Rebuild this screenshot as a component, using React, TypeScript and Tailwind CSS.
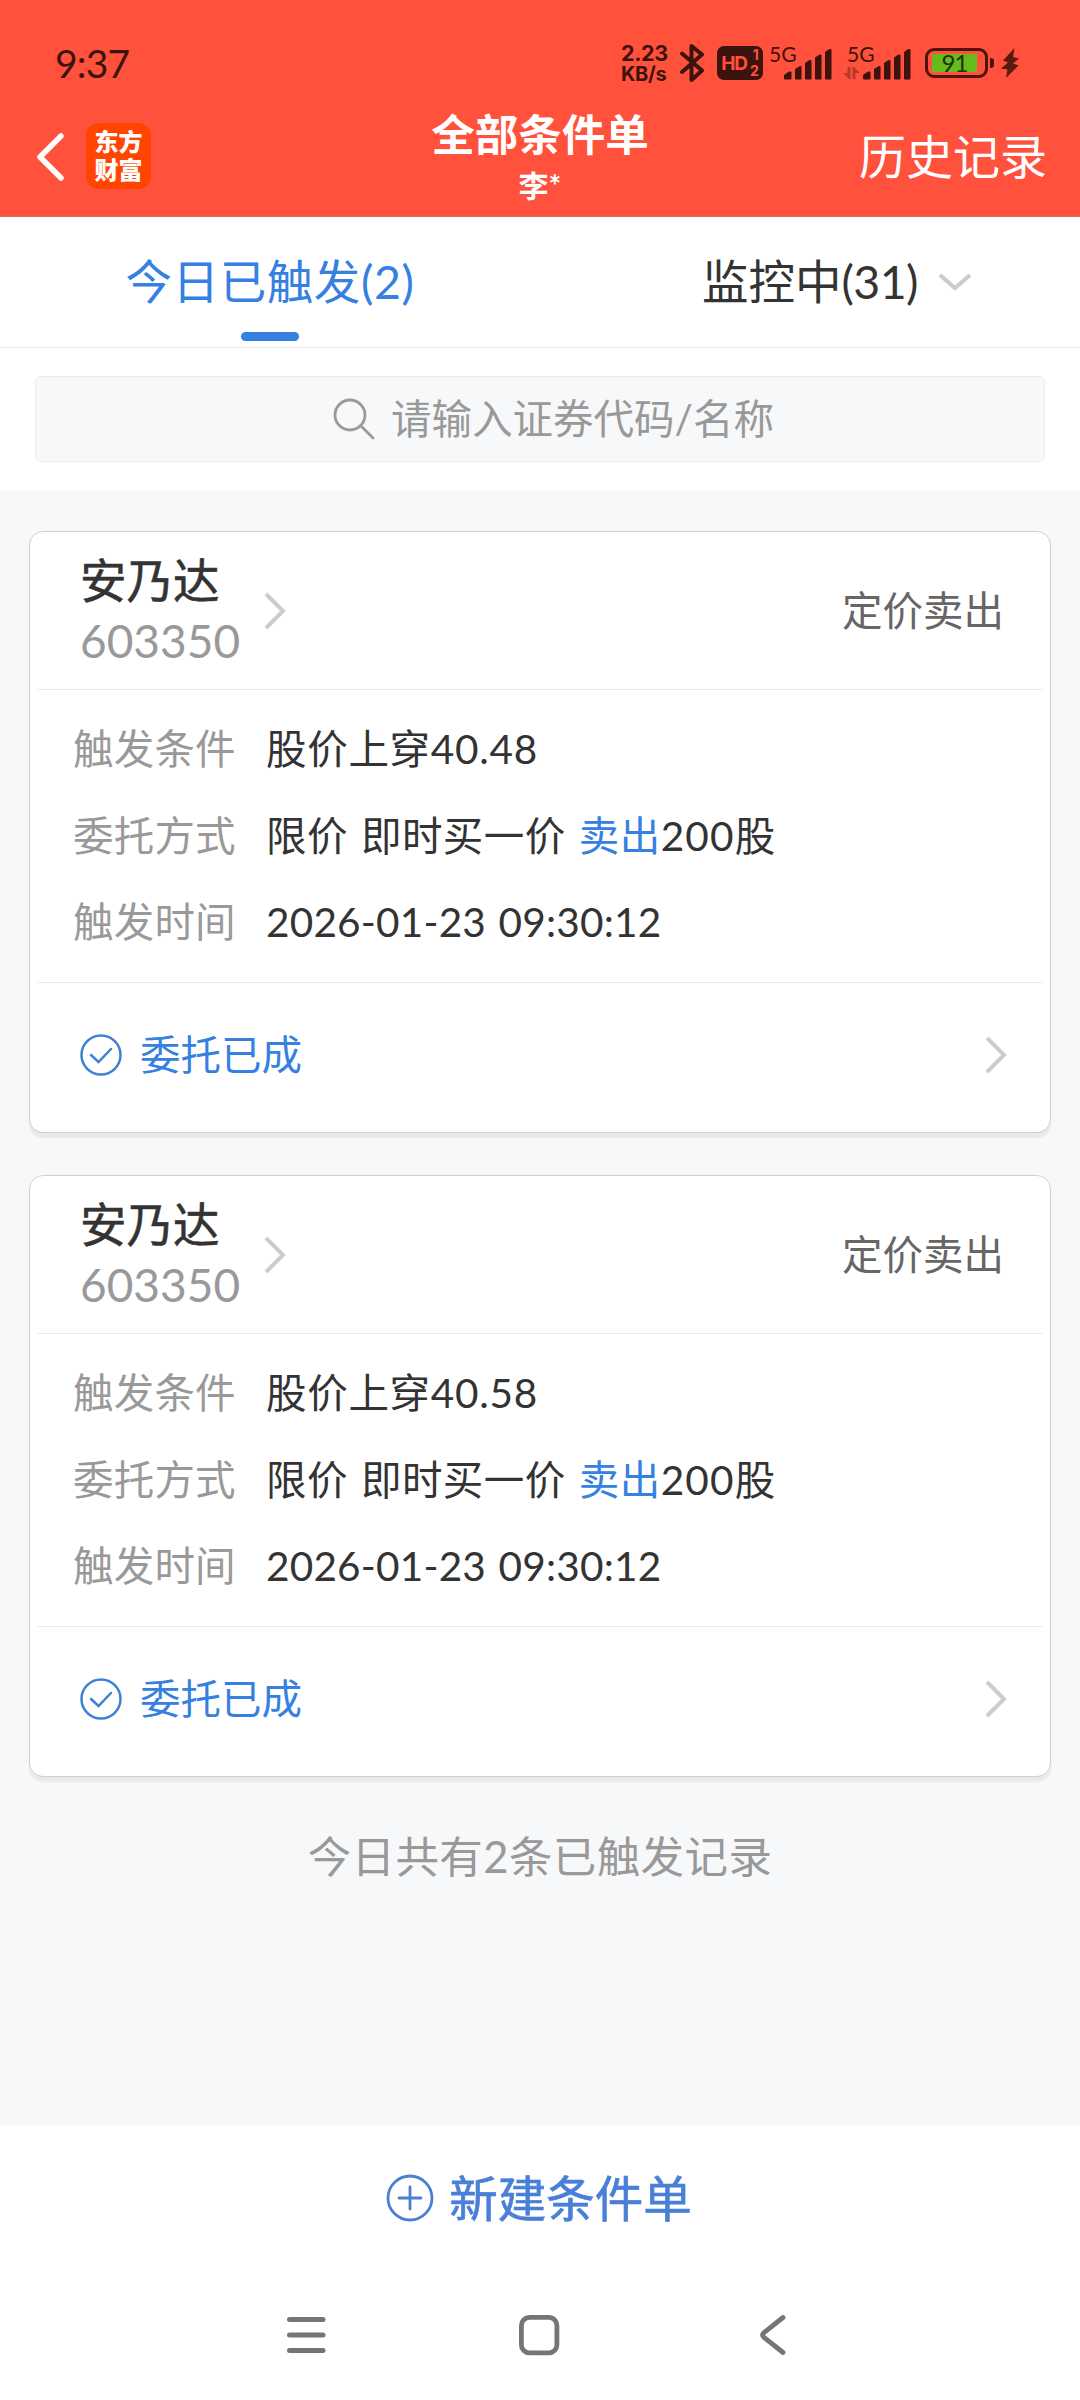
import React from 'react';

interface Order {
  id: number;
  name: string;
  code: string;
  type: string;
  condition: string;
  time: string;
}

const orders: Order[] = [
  { id: 1, name: '安乃达', code: '603350', type: '定价卖出', condition: '股价上穿40.48', time: '2026-01-23 09:30:12' },
  { id: 2, name: '安乃达', code: '603350', type: '定价卖出', condition: '股价上穿40.58', time: '2026-01-23 09:30:12' },
];

const SignalBars: React.FC = () => (
  <svg width="48" height="31" viewBox="0 0 48 31" fill="#3d130d">
    <path d="M0 29.5v-3.5l5-3.5h1.5q1 0 1 1v6q0 1-1 1h-5.5q-1 0-1-1z" />
    <path d="M11 29.500V20l5-3h.5q1 0 1 1v11.500q0 1-1 1h-4.500q-1 0-1-1z" />
    <path d="M21 29.500V14l4.500-3h1q1 0 1 1v17.500q0 1-1 1h-4.500q-1 0-1-1z" />
    <path d="M31 29.500V8.500l4.500-3h1q1 0 1 1v23q0 1-1 1h-4.500q-1 0-1-1z" />
    <path d="M41 29.500V3l4.500-3h1q1 0 1 1v28.500q0 1-1 1h-4.500q-1 0-1-1z" />
  </svg>
);

const StatusBar: React.FC = () => (
  <div className="flex h-[106px] items-start pl-[55px] text-[#3d130d]">
    <div className="mt-[39px] w-[566px] text-[39px] leading-[48px] tracking-[-0.8px]">9:37</div>
    <div className="mt-[43px] w-[59px] font-[Inter] text-[21px] font-bold whitespace-nowrap">
      <div className="text-[21.5px] leading-[21px] tracking-[-0.3px]">2.23</div>
      <div className="text-[20px] leading-[20px] tracking-[-0.3px]">KB/s</div>
    </div>
    <svg className="mt-[43px]" width="24" height="40" viewBox="0 0 24 40" fill="none" stroke="#3d130d" strokeWidth="4" strokeLinejoin="round" strokeLinecap="round">
      <path d="M2 10.500L22 27.500L11.500 37V3L22 11.500L2 29" />
    </svg>
    <div className="mt-[46px] ml-[13px] flex h-[34px] w-[46px] items-center justify-center gap-[3px] rounded-[7px] bg-[#3d130d] font-[Inter] font-bold text-[#ff513c]">
      <span className="text-[19px] leading-none tracking-[-1px]">HD</span>
      <span className="flex flex-col items-end text-[14px] leading-[16px]">
        <span>1</span>
        <span>2</span>
      </span>
    </div>
    <div className="mt-[44px] ml-[6px] flex">
      <span className="w-[15px] text-[21px] leading-[19px]">5G</span>
      <div className="mt-[5px]">
        <SignalBars />
      </div>
    </div>
    <div className="mt-[44px] ml-[11px] flex">
      <div className="w-[20px]">
        <div className="w-[30px] pl-[4px] text-[21px] leading-[19px]">5G</div>
        <svg className="mt-[4px]" width="17" height="12" viewBox="0 0 17 12" fill="#b93a2b">
          <path d="M4.500 0H7.500V12H6L0 6H4.500z" />
          <path d="M9.500 0H11L17 6H12.500V12H9.500z" />
        </svg>
      </div>
      <div className="mt-[5px]">
        <SignalBars />
      </div>
    </div>
    <div className="mt-[48px] ml-[14px] flex items-center">
      <div className="flex h-[30px] w-[63px] items-center rounded-[9px] border-[3px] border-[#4d150d] pl-[4px]">
        <div className="flex h-[18px] w-[45px] items-center justify-center bg-[#66ba1b] text-[24px] leading-none tracking-[-1px] text-[#1c3108]">91</div>
      </div>
      <div className="ml-[2px] h-[10px] w-[4px] rounded-r-[3px] rounded-l-[1px] bg-[#4d150d]" />
    </div>
    <svg className="mt-[48px] ml-[7px]" width="18" height="30" viewBox="0 0 18 30" fill="#5a1a12">
      <path d="M13.500 0L2 12.500L7 14.500L0 20.500L6.500 21.500L5 30L17.500 17.500L12 15.500L18 10.500L12 9z" />
    </svg>
  </div>
);

const Header: React.FC = () => (
  <header className="h-[217px] border-b border-[#d9705f] bg-[#ff513c]">
    <StatusBar />
    <div className="grid h-[104px] grid-cols-3 text-white">
      <div className="flex items-start pl-[34px]">
        <svg className="mt-[26px]" width="32" height="50" viewBox="0 0 32 50" fill="none" stroke="#fff" strokeWidth="5.500" strokeLinecap="round" strokeLinejoin="round">
          <path d="M27 4L6 25L27 46" />
        </svg>
        <div className="mt-[17px] ml-[20px] flex h-[66px] w-[65px] flex-col items-center justify-center rounded-[13px] bg-[#ff4500] text-[24px] leading-[28px] font-black">
          <span>东方</span>
          <span>财富</span>
        </div>
      </div>
      <div className="flex flex-col items-center pt-[2px]">
        <h1 className="text-[43.5px] leading-[52px] font-bold">全部条件单</h1>
        <div className="mt-[4px] text-[30px] leading-[42px] font-bold">李*</div>
      </div>
      <div className="pt-[20px] pr-[33px] text-right text-[47px] leading-[60px]">历史记录</div>
    </div>
  </header>
);

const Tabs: React.FC = () => (
  <div className="grid h-[131px] grid-cols-2 border-b border-[#ececee] bg-white text-[46.5px] leading-[60px]">
    <div className="flex flex-col items-center pt-[34px] text-[#3580e1]">
      <span className="tracking-[0.6px]">今日已触发(2)</span>
      <div className="mt-[21px] h-[9px] w-[58px] rounded-full bg-[#3580e1]" />
    </div>
    <div className="flex items-start pt-[34px] pl-[162px] text-[#333]">
      <span>
        监控中<span className="tracking-[-0.6px]">(31)</span>
      </span>
      <svg className="mt-[20px] ml-[20px]" width="34" height="22" viewBox="0 0 34 22" fill="none" stroke="#ccc" strokeWidth="4">
        <path d="M2 4L17 17L32 4" />
      </svg>
    </div>
  </div>
);

const SearchBox: React.FC = () => (
  <div className="h-[143px] bg-white px-[35px] pt-[28px]">
    <div className="flex h-[86px] items-center justify-center rounded-[6px] border border-[#e9ebed] bg-[#f7f8fa] pl-[27px] text-[40.5px] leading-[52px] text-[#999]">
      <svg className="mr-[16px]" width="42" height="42" viewBox="0 0 42 42" fill="none" stroke="#999" strokeWidth="2.800" strokeLinecap="round">
        <circle cx="17" cy="17" r="15" />
        <path d="M28 28L40 40" />
      </svg>
      <span>请输入证券代码/名称</span>
    </div>
  </div>
);

const ChevronRight: React.FC = () => (
  <svg width="24" height="38" viewBox="0 0 24 38" fill="none" stroke="#ccc" strokeWidth="4">
    <path d="M2 2L19 19L2 36" />
  </svg>
);

const OrderCard: React.FC<{ order: Order }> = ({ order }) => (
  <div className="h-[602px] rounded-[14px] border border-[#cfcfcf] bg-white px-[7px] shadow-[0_5px_2px_rgba(0,0,0,0.06)]">
    <div className="flex h-[158px] items-center border-b border-[#ececee] pr-[39px] pl-[43px]">
      <div>
        <div className="text-[46.5px] leading-[60px] text-[#333] [-webkit-text-stroke:0.6px]">{order.name}</div>
        <div className="text-[46px] leading-[62px] text-[#999]">{order.code}</div>
      </div>
      <div className="ml-[24px]">
        <ChevronRight />
      </div>
      <div className="ml-auto text-[40.5px] leading-[56px] text-[#666]">{order.type}</div>
    </div>
    <div className="flex h-[293px] flex-col border-b border-[#ececee] pt-[16px] pl-[36px] text-[40.5px] leading-[86.5px] tracking-[0.2px] text-[#333]">
      <Row label="触发条件">
        <span className="tracking-[0.7px]">{order.condition}</span>
      </Row>
      <Row label="委托方式">
        <span className="tracking-[0.4px] [word-spacing:2.5px]">
          限价 即时买一价 <span className="text-[#3580e1]">卖出</span>
          <span className="tracking-[1.2px]">200</span>股
        </span>
      </Row>
      <Row label="触发时间">
        <span className="[word-spacing:2px]">{order.time}</span>
      </Row>
    </div>
    <div className="flex h-[144px] items-center pr-[34px] pl-[43px]">
      <svg width="42" height="42" viewBox="0 0 42 42" fill="none" stroke="#3f80d6" strokeWidth="2.500" strokeLinecap="round">
        <circle cx="21" cy="21" r="19.500" />
        <path d="M11 21L18.500 28L31 15" />
      </svg>
      <span className="ml-[18px] text-[40.5px] leading-[56px] text-[#3580e1]">委托已成</span>
      <div className="ml-auto">
        <ChevronRight />
      </div>
    </div>
  </div>
);

const Row: React.FC<{ label: string; children: React.ReactNode }> = ({ label, children }) => (
  <div className="flex">
    <span className="w-[193px] text-[#999]">{label}</span>
    <span>{children}</span>
  </div>
);

const NavBar: React.FC = () => (
  <nav className="flex h-[130px] items-center pl-[286px]">
    <svg width="40" height="42" viewBox="0 0 40 42" stroke="#757575" strokeWidth="5" strokeLinecap="round">
      <path d="M3.500 5.500H37M3.500 21H37M3.500 36.500H37" />
    </svg>
    <svg className="ml-[192px]" width="42" height="42" viewBox="0 0 42 42" fill="none" stroke="#757575" strokeWidth="4.800">
      <rect x="3.400" y="3.400" width="35.500" height="35.500" rx="8" />
    </svg>
    <svg className="ml-[198px]" width="28" height="42" viewBox="0 0 28 42" fill="none" stroke="#757575" strokeWidth="4.800" strokeLinecap="round">
      <path d="M25 3.500L6 18.500Q3 21 6 23.500L25 38.500" />
    </svg>
  </nav>
);

const App: React.FC = () => {
  return (
    <div className="flex h-[2400px] w-[1080px] flex-col overflow-hidden bg-[#f7f8fa] font-[Lato,'Noto_Sans_CJK_SC',sans-serif]">
      <Header />
      <Tabs />
      <SearchBox />
      <main className="flex flex-1 flex-col gap-[42px] px-[29px] pt-[40px]">
        {orders.map((order) => (
          <OrderCard key={order.id} order={order} />
        ))}
        <p className="mt-[7px] text-center text-[43.5px] leading-[60px] tracking-[0.4px] text-[#999]">今日共有2条已触发记录</p>
      </main>
      <footer className="h-[274px] bg-white">
        <div className="flex h-[144px] items-center justify-center pr-[2px] text-[48.5px] leading-[60px] text-[#4a7fd8] [-webkit-text-stroke:0.7px]">
          <svg className="mr-[15px]" width="48" height="48" viewBox="0 0 48 48" fill="none" stroke="#4a80d2" strokeWidth="2.800" strokeLinecap="round">
            <circle cx="24" cy="24" r="22" />
            <path d="M13 24H35M24 13V35" />
          </svg>
          新建条件单
        </div>
        <NavBar />
      </footer>
    </div>
  );
};

export default App;
